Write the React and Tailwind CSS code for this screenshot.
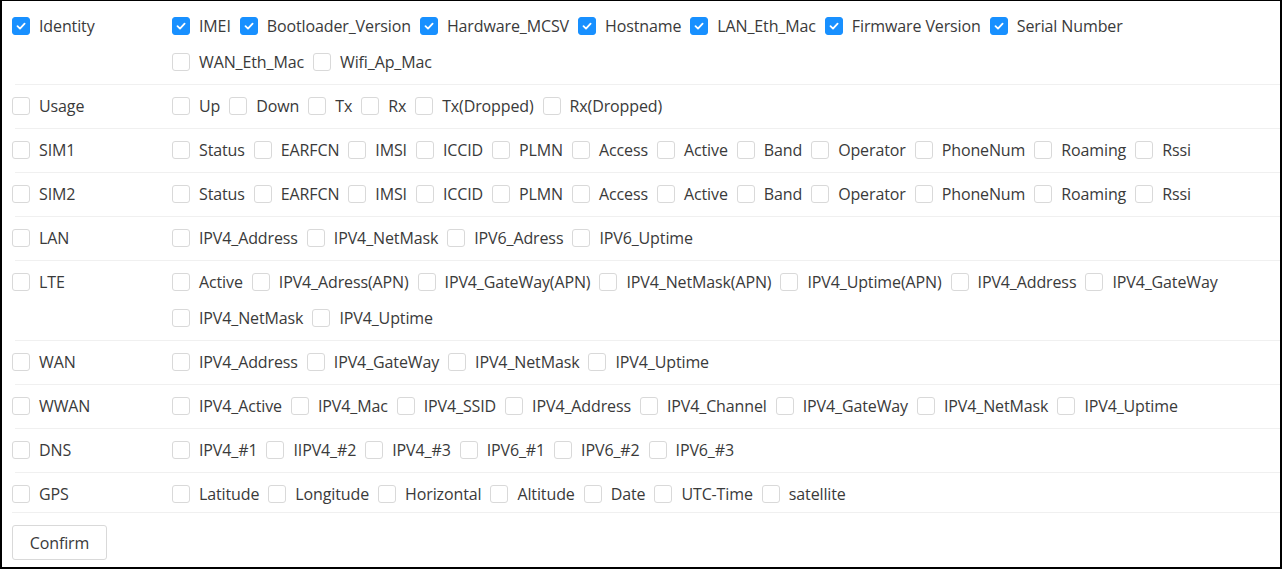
import React, { useState } from "react";

const GROUPS = [
  {
    name: "Identity",
    items: [
      "IMEI",
      "Bootloader_Version",
      "Hardware_MCSV",
      "Hostname",
      "LAN_Eth_Mac",
      "Firmware Version",
      "Serial Number",
      "WAN_Eth_Mac",
      "Wifi_Ap_Mac",
    ],
    checked: ["IMEI", "Bootloader_Version", "Hardware_MCSV", "Hostname", "LAN_Eth_Mac", "Firmware Version", "Serial Number"],
    groupChecked: true,
  },
  { name: "Usage", items: ["Up", "Down", "Tx", "Rx", "Tx(Dropped)", "Rx(Dropped)"] },
  {
    name: "SIM1",
    items: ["Status", "EARFCN", "IMSI", "ICCID", "PLMN", "Access", "Active", "Band", "Operator", "PhoneNum", "Roaming", "Rssi"],
  },
  {
    name: "SIM2",
    items: ["Status", "EARFCN", "IMSI", "ICCID", "PLMN", "Access", "Active", "Band", "Operator", "PhoneNum", "Roaming", "Rssi"],
  },
  { name: "LAN", items: ["IPV4_Address", "IPV4_NetMask", "IPV6_Adress", "IPV6_Uptime"] },
  {
    name: "LTE",
    items: [
      "Active",
      "IPV4_Adress(APN)",
      "IPV4_GateWay(APN)",
      "IPV4_NetMask(APN)",
      "IPV4_Uptime(APN)",
      "IPV4_Address",
      "IPV4_GateWay",
      "IPV4_NetMask",
      "IPV4_Uptime",
    ],
  },
  { name: "WAN", items: ["IPV4_Address", "IPV4_GateWay", "IPV4_NetMask", "IPV4_Uptime"] },
  {
    name: "WWAN",
    items: ["IPV4_Active", "IPV4_Mac", "IPV4_SSID", "IPV4_Address", "IPV4_Channel", "IPV4_GateWay", "IPV4_NetMask", "IPV4_Uptime"],
  },
  { name: "DNS", items: ["IPV4_#1", "IIPV4_#2", "IPV4_#3", "IPV6_#1", "IPV6_#2", "IPV6_#3"] },
  { name: "GPS", items: ["Latitude", "Longitude", "Horizontal", "Altitude", "Date", "UTC-Time", "satellite"] },
];

const Box = ({ on }) => (
  <span
    className={`flex h-[18px] w-[18px] shrink-0 items-center justify-center rounded-[3px] border ${
      on ? "border-[#1890ff] bg-[#1890ff]" : "border-[#d9d9d9] bg-white"
    }`}
  >
    {on && (
      <svg viewBox="0 0 12 12" className="h-[12px] w-[12px]">
        <polyline points="2.5,6.2 5,8.6 9.6,3.6" fill="none" stroke="white" strokeWidth="1.8" strokeLinecap="round" strokeLinejoin="round" />
      </svg>
    )}
  </span>
);

const Check = ({ label, on, onToggle }) => (
  <label className="flex h-9 cursor-pointer items-center pr-[9px]" onClick={onToggle}>
    <Box on={on} />
    <span className="pl-[9px] whitespace-nowrap">{label}</span>
  </label>
);

export default function App() {
  const [state, setState] = useState(() => {
    const s = {};
    GROUPS.forEach((g) => {
      s[g.name] = !!g.groupChecked;
      g.items.forEach((it) => {
        s[`${g.name}.${it}`] = (g.checked || []).includes(it);
      });
    });
    return s;
  });

  const toggle = (key) => setState((s) => ({ ...s, [key]: !s[key] }));

  return (
    <div
      className="h-[569px] w-[1282px] border-t border-l-2 border-r-2 border-b-2 border-black bg-white pt-[4px] text-[16px] tracking-[-0.12px] text-[#3a3a3a]"
      style={{ fontFamily: '"Open Sans", "Noto Sans", sans-serif' }}
    >
      {GROUPS.map((g, i) => {
        const last = i === GROUPS.length - 1;
        return (
          <div key={g.name} className={`ml-[13px] ${last ? "" : "border-b border-[#f0f0f0] pb-[4px]"} pt-[3px]`}>
            <div className="-ml-[3px] flex">
              <div className="w-[160px] shrink-0">
                <Check label={g.name} on={state[g.name]} onToggle={() => toggle(g.name)} />
              </div>
              <div className="flex flex-1 flex-wrap pr-[14px]">
                {g.items.map((it) => (
                  <Check
                    key={it}
                    label={it}
                    on={state[`${g.name}.${it}`]}
                    onToggle={() => toggle(`${g.name}.${it}`)}
                  />
                ))}
              </div>
            </div>
          </div>
        );
      })}
      <div className="ml-[10px] border-t border-[#f0f0f0] pt-3">
        <button className="h-[35px] w-[95px] rounded-[3px] border border-[#d9d9d9] bg-white text-[16px] text-[#3a3a3a]">
          Confirm
        </button>
      </div>
    </div>
  );
}
